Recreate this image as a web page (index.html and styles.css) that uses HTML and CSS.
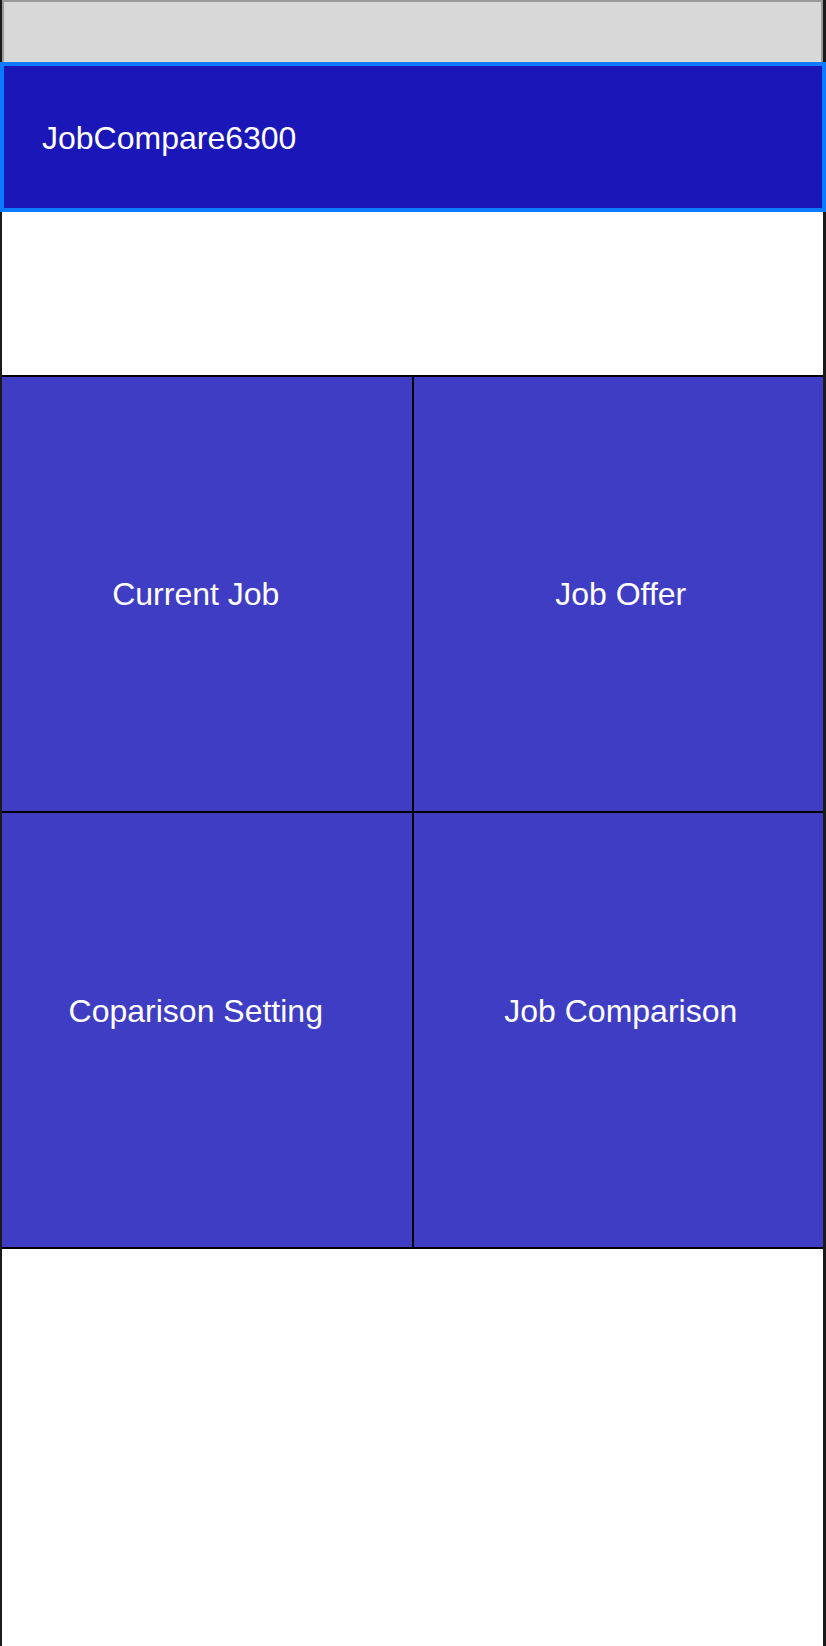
FILE: index.html
```html
<!DOCTYPE html>
<html lang="en">
<head>
<meta charset="utf-8">
<title>JobCompare6300</title>
<link rel="stylesheet" href="styles.css">
</head>
<body>
<div class="phone">
  <div class="statusbar"></div>
  <header class="appbar"><span class="title">JobCompare6300</span></header>
  <div class="spacer"></div>
  <main class="menu">
    <div class="tile tile-left tile-top">Current Job</div>
    <div class="tile tile-right tile-top">Job Offer</div>
    <div class="tile tile-left tile-bottom">Coparison Setting</div>
    <div class="tile tile-right tile-bottom">Job Comparison</div>
  </main>
</div>
</body>
</html>
```

FILE: styles.css
```css
html, body {
  margin: 0;
  padding: 0;
  background: #ffffff;
  overflow: hidden;
}

.phone {
  box-sizing: border-box;
  width: 826px;
  height: 1646px;
  border-left: 2px solid #1a1a1a;
  border-right: 3px solid #1a1a1a;
  background: #ffffff;
  display: flex;
  flex-direction: column;
  font-family: "Liberation Sans", Arial, Helvetica, sans-serif;
}

.statusbar {
  box-sizing: border-box;
  height: 62px;
  background: #d8d8d8;
  border: 2px solid #999999;
  border-bottom: none;
  flex: none;
}

.appbar {
  box-sizing: border-box;
  height: 150px;
  margin: 0 -3px 0 -2px;
  border: 4px solid #0a7bff;
  background: #1b16b7;
  display: flex;
  align-items: center;
  padding: 3px 0 0 38px;
  flex: none;
}

.title {
  color: #ffffff;
  font-size: 32px;
}

.spacer {
  height: 163px;
  flex: none;
}

.menu {
  box-sizing: border-box;
  height: 874px;
  background: #000000;
  padding: 2px 0;
  display: grid;
  grid-template-columns: 1fr 1fr;
  grid-template-rows: 1fr 1fr;
  gap: 2px;
  flex: none;
}

.tile {
  background: #3f3dc3;
  color: #ffffff;
  font-size: 32px;
  display: flex;
  align-items: center;
  justify-content: center;
}

.tile-left {
  padding-right: 22px;
}

.tile-right {
  padding-left: 5px;
}

.tile-top {
  padding-top: 0;
}

.tile-bottom {
  padding-bottom: 38px;
}
```
